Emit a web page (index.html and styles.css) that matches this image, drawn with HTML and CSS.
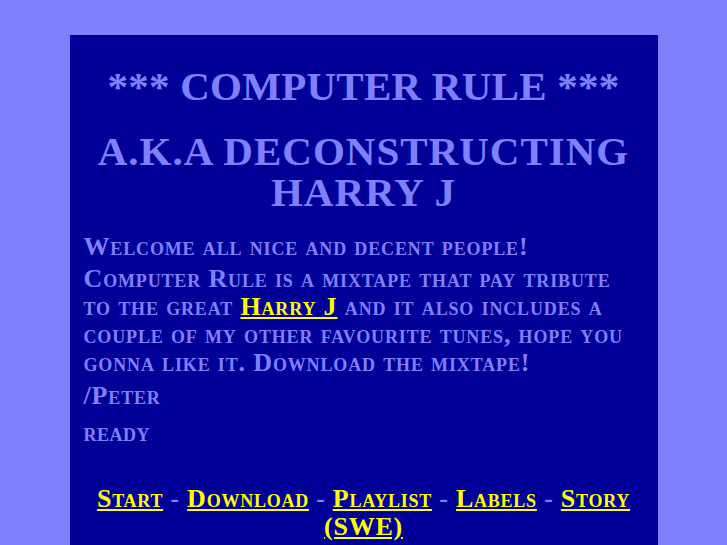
FILE: index.html
```html
<!DOCTYPE html>
<html>
<head>
<meta charset="utf-8">
<link rel="stylesheet" href="styles.css">
</head>
<body>
<div class="box">
  <h1 class="title">*** COMPUTER RULE ***</h1>
  <h1 class="title sub">A.K.A DECONSTRUCTING HARRY J</h1>
  <p class="text welcome">Welcome all nice and decent people!</p>
  <p class="text">Computer Rule is a mixtape that pay tribute to the great <a href="#">Harry J</a> and it also includes a couple of my other favourite tunes, hope you gonna like it. Download the mixtape!</p>
  <p class="text peter">/Peter</p>
  <p class="ready">ready</p>
  <p class="nav"><a href="#">Start</a> - <a href="#">Download</a> - <a href="#">Playlist</a> - <a href="#">Labels</a> - <a href="#">Story (SWE)</a></p>
</div>
</body>
</html>
```
FILE: styles.css
```css
html, body {
  margin: 0;
  padding: 0;
  background: #8080ff;
}
body {
  font-family: "Liberation Serif", serif;
  color: #8080ff;
  padding-top: 35px;
}
.box {
  width: 560px;
  margin: 0 auto;
  background: #000099;
  padding: 14px 14px 40px;
}
.title {
  text-align: center;
  font-size: 41px;
  font-weight: bold;
  margin: 17px 0 0;
  line-height: 41px;
  letter-spacing: 0.25px;
}
.sub {
  margin-top: 24px;
  letter-spacing: 1px;
}
.text {
  font-variant: small-caps;
  font-weight: bold;
  font-size: 26px;
  line-height: 28px;
  letter-spacing: 0.85px;
  margin: 0;
}
.welcome {
  margin-top: 20px;
  margin-bottom: 4px;
}
.peter {
  margin-top: 5px;
}
.ready {
  font-variant: small-caps;
  font-weight: bold;
  font-size: 26px;
  letter-spacing: 0.5px;
  margin: 8px 0 0;
}
.nav {
  text-align: center;
  font-variant: small-caps;
  font-weight: bold;
  font-size: 26px;
  line-height: 28px;
  letter-spacing: 0.75px;
  margin: 37px 0 0;
}
a {
  color: #ffff00;
}
```
